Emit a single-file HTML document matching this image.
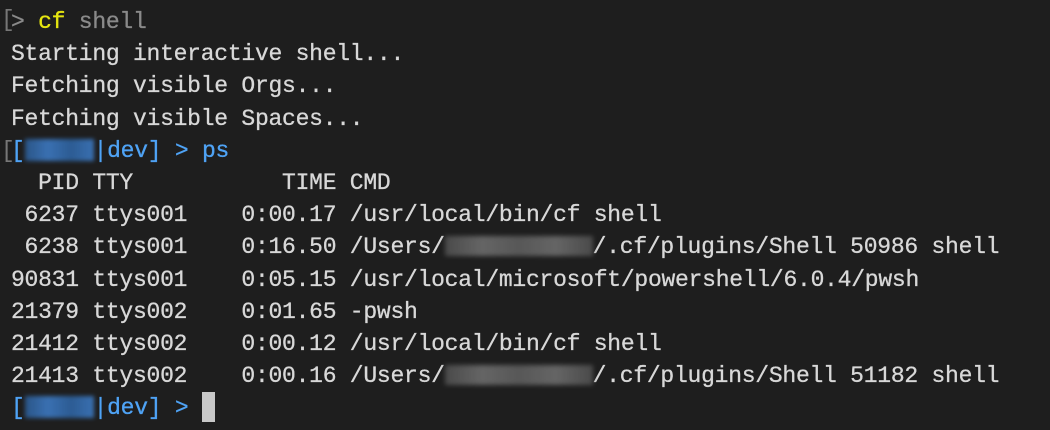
<!DOCTYPE html>
<html><head><style>
html,body{margin:0;padding:0;background:#1e1e1e;width:1050px;height:430px;overflow:hidden}
.t{position:absolute;left:11px;top:6px;font-family:"Liberation Mono",monospace;font-size:23px;line-height:32.2px;color:#d8d8d8;white-space:pre;letter-spacing:-0.25px;-webkit-text-stroke:0.3px #d8d8d8}
.y{color:#e5e510;-webkit-text-stroke:0.3px #e5e510}.g{color:#8a8a8a;-webkit-text-stroke:0.3px #8a8a8a}.b{color:#4fa3f5;-webkit-text-stroke:0.3px #4fa3f5}
.blurb{display:inline-block;width:69px;height:22px;vertical-align:-4px;background:linear-gradient(90deg,#2d5f9a,#3f7fcc,#2f67a8,#3f7fcc);filter:blur(2px);opacity:.85}
.blurg{display:inline-block;width:148px;height:20px;vertical-align:-3px;background:linear-gradient(90deg,#555,#777,#666,#777,#555);filter:blur(2.5px);opacity:.8}
.cur{display:inline-block;width:13px;height:30px;background:#c8c8c8;vertical-align:-8px}
.lb{position:absolute;left:1px;font-family:"Liberation Mono",monospace;font-size:23px;color:#777}
</style></head><body>
<div class="lb" style="top:7px">[</div>
<div class="lb" style="top:138px">[</div>
<div class="t"><span class="g">&gt; </span><span class="y">cf</span><span class="g"> shell</span>
Starting interactive shell...
Fetching visible Orgs...
Fetching visible Spaces...
<span class="b">[<span class="blurb"></span>|dev] &gt; ps</span>
  PID TTY           TIME CMD
 6237 ttys001    0:00.17 /usr/local/bin/cf shell
 6238 ttys001    0:16.50 /Users/<span class="blurg"></span>/.cf/plugins/Shell 50986 shell
90831 ttys001    0:05.15 /usr/local/microsoft/powershell/6.0.4/pwsh
21379 ttys002    0:01.65 -pwsh
21412 ttys002    0:00.12 /usr/local/bin/cf shell
21413 ttys002    0:00.16 /Users/<span class="blurg"></span>/.cf/plugins/Shell 51182 shell
<span class="b">[<span class="blurb"></span>|dev] &gt; </span><span class="cur"></span></div>
</body></html>
